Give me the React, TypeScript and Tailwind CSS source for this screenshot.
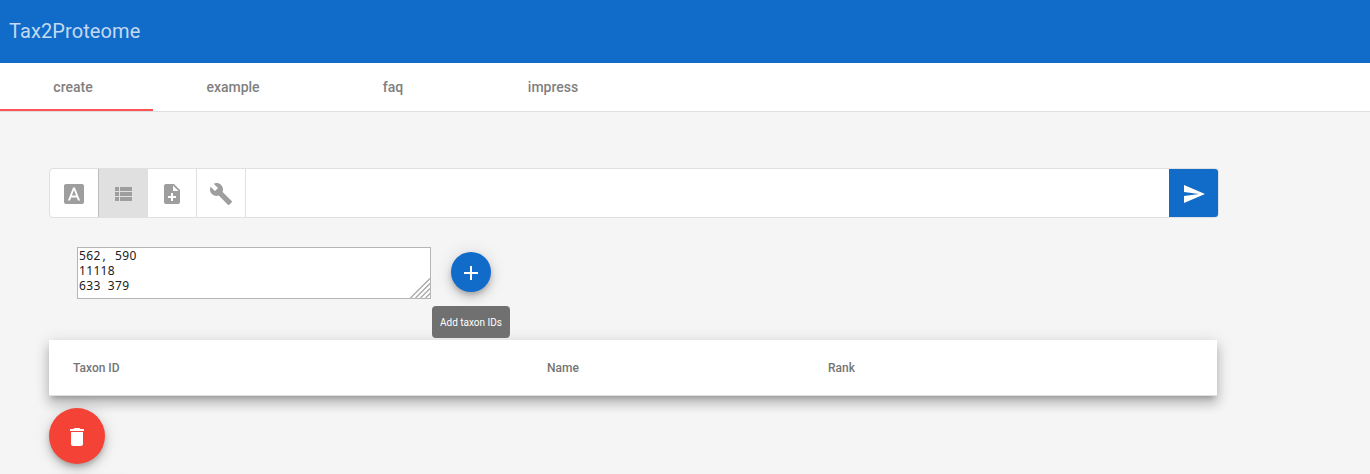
import type { ReactNode } from "react";

const ICONS = {
  fontDownload:
    "M9.93 13.5h4.14L12 7.98zM20 2H4c-1.1 0-2 .9-2 2v16c0 1.1.9 2 2 2h16c1.1 0 2-.9 2-2V4c0-1.1-.9-2-2-2zm-4.05 16.5l-1.14-3H9.17l-1.12 3H5.96l5.11-13h1.86l5.11 13h-2.09z",
  viewList:
    "M4 14h4v-4H4v4zm0 5h4v-4H4v4zM4 9h4V5H4v4zm5 5h12v-4H9v4zm0 5h12v-4H9v4zM9 5v4h12V5H9z",
  noteAdd:
    "M14 2H6c-1.1 0-1.99.9-1.99 2L4 20c0 1.1.89 2 1.99 2H18c1.1 0 2-.9 2-2V8l-6-6zm2 14h-3v3h-2v-3H8v-2h3v-3h2v3h3v2zm-3-7V3.5L18.5 9H13z",
  build:
    "M22.7 19l-9.1-9.1c.9-2.3.4-5-1.5-6.9-2-2-5-2.4-7.4-1.3L9 6 6 9 1.6 4.7C.4 7.1.9 10.1 2.9 12.1c1.9 1.9 4.6 2.4 6.9 1.5l9.1 9.1c.4.4 1 .4 1.4 0l2.3-2.3c.5-.4.5-1.1.1-1.4z",
  send: "M2.01 21L23 12 2.01 3 2 10l15 2-15 2z",
  add: "M19 13h-6v6h-2v-6H5v-2h6V5h2v6h6v2z",
  remove: "M6 19c0 1.1.9 2 2 2h8c1.1 0 2-.9 2-2V7H6v12zM19 4h-3.5l-1-1h-5l-1 1H5v2h14V4z",
};

function Icon({ name }: { name: keyof typeof ICONS }) {
  return (
    <svg viewBox="0 0 24 24" className="mt-0.5 size-6 shrink-0" fill="currentColor">
      <path d={ICONS[name]} />
    </svg>
  );
}

function ToggleButton({ active, children }: { active?: boolean; children: ReactNode }) {
  return (
    <button
      className={
        active
          ? "flex h-full w-[49px] items-center justify-center border-l border-[#bdbdbd] bg-[#e0e0e0] text-[#9e9e9e]"
          : "flex h-full w-[49px] items-center justify-center border-l border-[#e0e0e0] text-[#9e9e9e] first:w-12 first:border-l-0"
      }
    >
      {children}
    </button>
  );
}

export default function App() {
  return (
    <div className="h-[474px] overflow-hidden bg-[#f5f5f5] font-['Roboto',sans-serif]">
      <header className="flex h-[63px] items-center bg-[#116bc9] pb-0.5 pl-[9px]">
        <h1 className="text-[20px] leading-8 tracking-[0.1px] text-white/75">Tax2Proteome</h1>
      </header>

      <nav className="flex h-[49px] border-b border-[#e0e0e0] bg-white text-sm font-medium text-[#7f7f7f]">
        <button className="flex w-[153px] items-center justify-center border-b-2 border-[#ff5252] pt-0.5 pr-[7px]">
          create
        </button>
        <button className="w-40">example</button>
        <button className="w-40">faq</button>
        <button className="w-40">impress</button>
      </nav>

      <main className="pl-[49px]">
        <div className="mt-14 flex h-[50px] w-[1170px] overflow-hidden rounded border border-[#e0e0e0] bg-white">
          <ToggleButton>
            <Icon name="fontDownload" />
          </ToggleButton>
          <ToggleButton active>
            <Icon name="viewList" />
          </ToggleButton>
          <ToggleButton>
            <Icon name="noteAdd" />
          </ToggleButton>
          <ToggleButton>
            <Icon name="build" />
          </ToggleButton>
          <div className="grow border-l border-[#e0e0e0]" />
          <button className="flex w-[49px] items-center justify-center bg-[#116bc9] text-white">
            <Icon name="send" />
          </button>
        </div>

        <div className="mt-[29px] flex h-[52px] pl-7">
          <div className="flex w-[354px] justify-between border border-[#b5b5b5] bg-white pl-px">
            <div
              role="textbox"
              aria-multiline="true"
              className="font-['Noto_Sans',sans-serif] text-xs leading-[15px] tracking-[0.34px] whitespace-pre text-[#212121] [word-spacing:3.74px]"
            >
              <div>
                562<span className="inline-block w-[7.2px] text-center">,</span> 590
              </div>
              <div>11118</div>
              <div>633 379</div>
            </div>
            <svg viewBox="0 0 20 20" className="size-5 self-end" stroke="#a8a8a8" strokeWidth="1.3">
              <path d="M0.5 20L20 0.5M5.5 20L20 5.5M10.5 20L20 10.5M15.5 20L20 15.5" />
            </svg>
          </div>
          <div className="relative mt-[5px] ml-5 size-10">
            <button className="flex size-10 items-center justify-center rounded-full bg-[#116bc9] text-white shadow-[0_3px_5px_-1px_rgba(0,0,0,.2),0_6px_10px_0_rgba(0,0,0,.14),0_1px_18px_0_rgba(0,0,0,.12)]">
              <Icon name="add" />
            </button>
            <div
              role="tooltip"
              className="absolute top-[54px] left-[-19px] z-10 flex h-8 w-[78px] items-center justify-center rounded bg-[#707070] text-[10px] whitespace-nowrap text-white"
            >
              Add taxon IDs
            </div>
          </div>
        </div>

        <table className="mt-[41px] block h-14 w-[1168px] border-b border-[#e0e0e0] bg-white text-left text-xs font-medium text-[#757575] shadow-[0_5px_5px_-3px_rgba(0,0,0,.2),0_8px_10px_1px_rgba(0,0,0,.14),0_3px_14px_2px_rgba(0,0,0,.12)]">
          <thead className="block">
            <tr className="flex h-[55px] items-center pl-6">
              <th className="w-[474px] font-medium">Taxon ID</th>
              <th className="w-[281px] font-medium">Name</th>
              <th className="font-medium">Rank</th>
            </tr>
          </thead>
        </table>

        <button className="mt-3 flex size-14 items-center justify-center rounded-full bg-[#f44336] text-white shadow-[0_3px_5px_-1px_rgba(0,0,0,.2),0_6px_10px_0_rgba(0,0,0,.14),0_1px_18px_0_rgba(0,0,0,.12)]">
          <Icon name="remove" />
        </button>

        <div className="mt-3 h-9 w-[78px] rounded bg-white shadow-[0_3px_1px_-2px_rgba(0,0,0,.2),0_2px_2px_0_rgba(0,0,0,.14),0_1px_5px_0_rgba(0,0,0,.12)]" />
      </main>
    </div>
  );
}
